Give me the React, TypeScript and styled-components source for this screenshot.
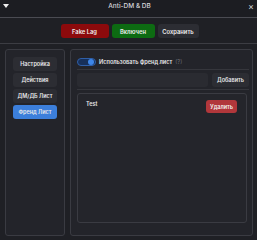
import React from "react";
import styled, { createGlobalStyle } from "styled-components";

const NAV_ITEMS = ["Настройка", "Действия", "ДМ/ДБ Лист", "Френд Лист"];
const FRIENDS = ["Test"];

const GlobalStyle = createGlobalStyle`
  html, body {
    margin: 0;
    padding: 0;
    background: #1f2025;
  }
  body {
    font-family: Inter, "Noto Sans", sans-serif;
    color: #e6e6e8;
  }
`;

const App: React.FC = () => {
  return (
    <Window>
      <GlobalStyle />
      <TitleBar>
        <Collapse>
          <svg width="6" height="6" viewBox="0 0 6 6">
            <polygon points="0,1 6,1 3,5" fill="#f0f0f0" />
          </svg>
        </Collapse>
        <Title>Anti-DM &amp; DB</Title>
        <Close>×</Close>
      </TitleBar>

      <Toolbar>
        <ActionButton $bg="#8c0a0c" $w={48}>Fake Lag</ActionButton>
        <ActionButton $bg="#0d6b12" $w={43}>Включен</ActionButton>
        <ActionButton $bg="#2c2d33" $w={41}>Сохранить</ActionButton>
      </Toolbar>

      <Main>
        <Sidebar>
          {NAV_ITEMS.map((item) => (
            <NavButton key={item} $active={item === "Френд Лист"}>
              {item}
            </NavButton>
          ))}
        </Sidebar>

        <Content>
          <ToggleRow>
            <Switch>
              <Knob />
            </Switch>
            <ToggleLabel>Использовать френд лист</ToggleLabel>
            <Hint>(?)</Hint>
          </ToggleRow>

          <AddRow>
            <Input />
            <SmallButton>Добавить</SmallButton>
          </AddRow>

          <ListBox>
            {FRIENDS.map((name) => (
              <ListItem key={name}>
                <ItemName>{name}</ItemName>
                <DeleteButton>Удалить</DeleteButton>
              </ListItem>
            ))}
          </ListBox>
        </Content>
      </Main>
    </Window>
  );
};

const Window = styled.div`
  height: 240px;
  display: flex;
  flex-direction: column;
  background: #1f2025;
  box-sizing: border-box;
`;

const TitleBar = styled.div`
  height: 18px;
  display: flex;
  align-items: center;
  padding: 0 1px 0 3px;
  border-bottom: 1px solid #4a4b52;
  box-sizing: border-box;
  background: #1c1d22;
`;

const Collapse = styled.div`
  width: 8px;
  height: 12px;
  display: flex;
  align-items: flex-start;
  padding-top: 1px;
`;

const Title = styled.div`
  flex: 1;
  text-align: center;
  font-size: 6.5px;
  font-weight: 500;
  color: #d8d8dc;
  padding-bottom: 5px;
`;

const Close = styled.div`
  width: 8px;
  font-size: 9px;
  line-height: 1;
  color: #d0d0d4;
  padding-bottom: 5px;
`;

const Toolbar = styled.div`
  display: flex;
  justify-content: center;
  gap: 3px;
  padding: 6px 0 5px 2px;
  border-bottom: 1px solid #3c3d43;
`;

const ActionButton = styled.div<{ $bg: string; $w: number }>`
  height: 14px;
  width: ${(p) => p.$w}px;
  display: flex;
  align-items: center;
  justify-content: center;
  border-radius: 3px;
  background: ${(p) => p.$bg};
  font-size: 5.8px;
  font-weight: 600;
  color: #eeeeee;
`;

const Main = styled.div`
  flex: 1;
  display: flex;
  gap: 5px;
  padding: 5px 4px 4px 5px;
  min-height: 0;
`;

const Panel = styled.div`
  border: 1px solid #3a3b42;
  border-radius: 3px;
  background: #23242a;
  box-sizing: border-box;
`;

const Sidebar = styled(Panel)`
  width: 60px;
  display: flex;
  flex-direction: column;
  align-items: center;
  gap: 2px;
  padding-top: 7px;
`;

const NavButton = styled.div<{ $active?: boolean }>`
  width: 44px;
  height: 14px;
  display: flex;
  align-items: center;
  justify-content: center;
  border-radius: 3px;
  background: ${(p) => (p.$active ? "#3c7fdb" : "#2c2d33")};
  font-size: 5.5px;
  font-weight: 600;
  color: #e8e8ea;
`;

const Content = styled(Panel)`
  flex: 1;
  display: flex;
  flex-direction: column;
  padding: 7px 3px 12px 6px;
`;

const ToggleRow = styled.div`
  display: flex;
  align-items: center;
  gap: 3px;
  height: 9px;
  padding-bottom: 3px;
  border-bottom: 1px solid #35363c;
`;

const Switch = styled.div`
  width: 19px;
  height: 8px;
  border-radius: 4px;
  background: #17305a;
  border: 1px solid #2f5fa8;
  box-sizing: border-box;
  display: flex;
  align-items: center;
  justify-content: flex-end;
  padding-right: 1px;
`;

const Knob = styled.div`
  width: 6px;
  height: 6px;
  border-radius: 50%;
  background: #3d86e8;
`;

const ToggleLabel = styled.span`
  font-size: 5.6px;
  font-weight: 600;
  color: #e6e6e8;
`;

const Hint = styled.span`
  font-size: 5.5px;
  color: #6e6f76;
`;

const AddRow = styled.div`
  display: flex;
  gap: 4px;
  padding: 3px 0 2px;
  border-bottom: 1px solid #35363c;
`;

const Input = styled.div`
  flex: 1;
  height: 14px;
  border-radius: 3px;
  background: #2a2b31;
`;

const SmallButton = styled.div`
  width: 37px;
  height: 14px;
  display: flex;
  align-items: center;
  justify-content: center;
  border-radius: 3px;
  background: #2c2d33;
  font-size: 5.5px;
  font-weight: 600;
  color: #e6e6e8;
`;

const ListBox = styled(Panel)`
  flex: 1;
  margin: 3px 2px 0 0;
  padding: 6px 9px 0 8px;
  background: #24252b;
`;

const ListItem = styled.div`
  display: flex;
  justify-content: space-between;
  align-items: flex-start;
`;

const ItemName = styled.div`
  font-size: 5.5px;
  font-weight: 600;
  color: #e6e6e8;
  padding-top: 1px;
`;

const DeleteButton = styled.div`
  width: 31px;
  height: 13px;
  display: flex;
  align-items: center;
  justify-content: center;
  border-radius: 3px;
  background: #b1373b;
  font-size: 5.5px;
  font-weight: 600;
  color: #f2f2f2;
`;

export default App;
